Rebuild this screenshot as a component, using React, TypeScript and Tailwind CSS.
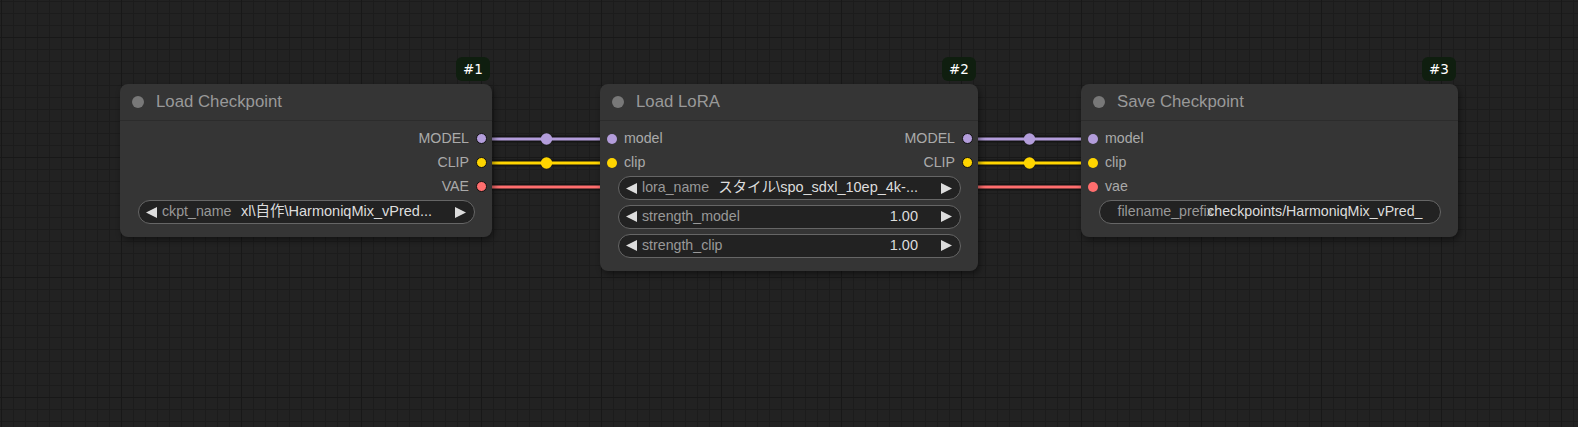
import React from "react";

type Slot = { name: string; color: string };
type Widget =
  | { kind: "combo"; label: string; value: string }
  | { kind: "text"; label: string; value: string };

const FONT = "font-['Liberation_Sans','Noto_Sans_CJK_JP',sans-serif]";

function LeftArrow() {
  return (
    <svg width="11" height="11" viewBox="0 0 11 11" className="shrink-0">
      <polygon points="11,0 11,11 0,5.5" fill="#dddddd" />
    </svg>
  );
}
function RightArrow() {
  return (
    <svg width="11" height="11" viewBox="0 0 11 11" className="shrink-0">
      <polygon points="0,0 0,11 11,5.5" fill="#dddddd" />
    </svg>
  );
}

function WidgetRow({ w }: { w: Widget }) {
  if (w.kind === "combo") {
    return (
      <div className="flex h-[24px] items-center rounded-full border border-[#666666] bg-[#222222] pl-[7.5px] pr-[7.5px]">
        <LeftArrow />
        <span className="ml-[5px] shrink-0 text-[#999999]">{w.label}</span>
        <span className="ml-[6px] flex-1 overflow-hidden whitespace-nowrap text-right text-[14.5px] text-[#dddddd]">
          {w.value}
        </span>
        <span className="w-[23px] shrink-0" />
        <RightArrow />
      </div>
    );
  }
  return (
    <div className="relative flex h-[24px] items-center overflow-hidden rounded-full border border-[#666666] bg-[#222222] px-[18px]">
      <span className="whitespace-nowrap text-[#999999]">{w.label}</span>
      <span className="absolute right-[17px] top-1/2 -translate-y-1/2 whitespace-nowrap text-[#dddddd]">
        {w.value}
      </span>
    </div>
  );
}

function Node({
  pos,
  title,
  badge,
  inputs,
  outputs,
  widgets,
}: {
  pos: string;
  title: string;
  badge: string;
  inputs: Slot[];
  outputs: Slot[];
  widgets: Widget[];
}) {
  const rows = Math.max(inputs.length, outputs.length);
  return (
    <div
      className={`absolute ${pos} rounded-[8px] bg-[#353535] shadow-[2px_3px_6px_rgba(0,0,0,0.45)]`}
    >
      <div className="absolute -top-[27px] right-[2px] flex h-[24px] w-[34px] items-center justify-center rounded-[6px] bg-[#0f1e0f] font-['DejaVu_Sans',sans-serif] text-[13.5px] text-white">
        {badge}
      </div>
      <div className="flex h-[37px] items-center border-b border-[#2c2c2c] pl-[12px]">
        <span className="h-[12px] w-[12px] rounded-full bg-[#787878]" />
        <span className="ml-[12px] text-[16.8px] text-[#999999]">{title}</span>
      </div>
      <div className="pt-[6px] pb-[13px] text-[14.2px]">
        {Array.from({ length: rows }).map((_, i) => (
          <div key={i} className="flex h-[24px] items-center justify-between">
            {inputs[i] ? (
              <div className="flex items-center gap-[7px] pl-[7px]">
                <span
                  className="h-[10px] w-[10px] rounded-full"
                  style={{ backgroundColor: inputs[i].color }}
                />
                <span className="text-[#aaaaaa]">{inputs[i].name}</span>
              </div>
            ) : (
              <div />
            )}
            {outputs[i] ? (
              <div className="flex items-center gap-[6.5px] pr-[5.5px]">
                <span className="text-[#aaaaaa]">{outputs[i].name}</span>
                <span
                  className="h-[11px] w-[11px] rounded-full border border-[#111111]"
                  style={{ backgroundColor: outputs[i].color }}
                />
              </div>
            ) : (
              <div />
            )}
          </div>
        ))}
        <div className="mt-[1px] flex flex-col gap-[4.8px] px-[17.5px]">
          {widgets.map((w, i) => (
            <WidgetRow key={i} w={w} />
          ))}
        </div>
      </div>
    </div>
  );
}

const PURPLE = "#b39ddb";
const YELLOW = "#ffd500";
const RED = "#ff6e6e";

function Links() {
  const links = [
    { x1: 481, x2: 612, y: 139, c: PURPLE, mid: true },
    { x1: 481, x2: 612, y: 163, c: YELLOW, mid: true },
    { x1: 481, x2: 1092, y: 187, c: RED, mid: false },
    { x1: 967, x2: 1092, y: 139, c: PURPLE, mid: true },
    { x1: 967, x2: 1092, y: 163, c: YELLOW, mid: true },
  ];
  return (
    <svg className="absolute left-0 top-0" width="1578" height="427">
      {links.map((l, i) => (
        <g key={i}>
          <line x1={l.x1} y1={l.y} x2={l.x2} y2={l.y} stroke="#141414" strokeWidth="7" />
          <line x1={l.x1} y1={l.y} x2={l.x2} y2={l.y} stroke={l.c} strokeWidth="3" />
          {l.mid && <circle cx={(l.x1 + l.x2) / 2} cy={l.y} r="5.7" fill={l.c} />}
        </g>
      ))}
    </svg>
  );
}

export default function App() {
  return (
    <div
      className={`relative h-[427px] w-[1578px] overflow-hidden bg-[#222222] bg-[linear-gradient(to_right,#181818_1px,transparent_1px),linear-gradient(to_bottom,#181818_1px,transparent_1px),linear-gradient(to_right,#1c1c1c_1px,transparent_1px),linear-gradient(to_bottom,#1c1c1c_1px,transparent_1px)] bg-[size:120px_120px,120px_120px,12px_12px,12px_12px] bg-[position:1px_37px,1px_37px,1px_1px,1px_1px] ${FONT}`}
    >
      <Links />
      <Node
        pos="left-[120px] top-[84px] w-[372px]"
        title="Load Checkpoint"
        badge="#1"
        inputs={[]}
        outputs={[
          { name: "MODEL", color: PURPLE },
          { name: "CLIP", color: YELLOW },
          { name: "VAE", color: RED },
        ]}
        widgets={[{ kind: "combo", label: "ckpt_name", value: "xl\\自作\\HarmoniqMix_vPred..." }]}
      />
      <Node
        pos="left-[600px] top-[84px] w-[378px]"
        title="Load LoRA"
        badge="#2"
        inputs={[
          { name: "model", color: PURPLE },
          { name: "clip", color: YELLOW },
        ]}
        outputs={[
          { name: "MODEL", color: PURPLE },
          { name: "CLIP", color: YELLOW },
        ]}
        widgets={[
          { kind: "combo", label: "lora_name", value: "スタイル\\spo_sdxl_10ep_4k-..." },
          { kind: "combo", label: "strength_model", value: "1.00" },
          { kind: "combo", label: "strength_clip", value: "1.00" },
        ]}
      />
      <Node
        pos="left-[1081px] top-[84px] w-[377px]"
        title="Save Checkpoint"
        badge="#3"
        inputs={[
          { name: "model", color: PURPLE },
          { name: "clip", color: YELLOW },
          { name: "vae", color: RED },
        ]}
        outputs={[]}
        widgets={[
          { kind: "text", label: "filename_prefix", value: "checkpoints/HarmoniqMix_vPred_" },
        ]}
      />
    </div>
  );
}
